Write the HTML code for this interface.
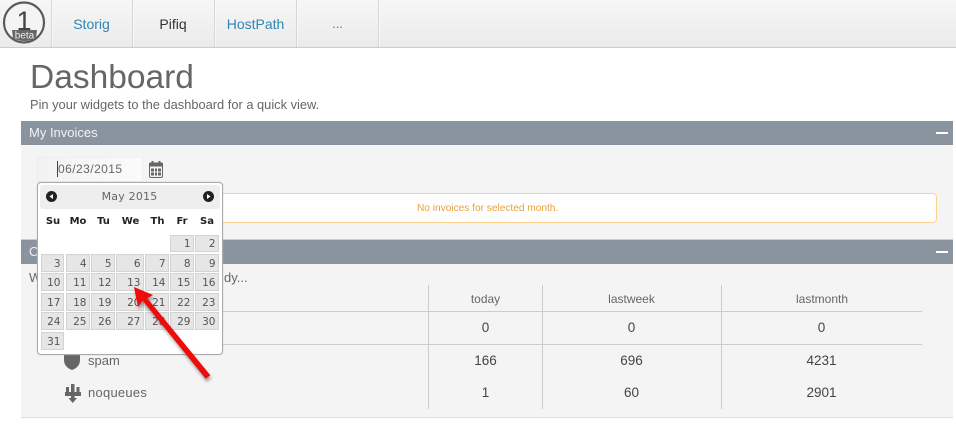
<!DOCTYPE html>
<html><head><meta charset="utf-8">
<style>
html,body{margin:0;padding:0;background:#fff;width:956px;height:425px;overflow:hidden;position:relative;font-family:"Liberation Sans",sans-serif;color:#555}
div,span,svg{position:absolute;box-sizing:border-box}
.t{white-space:nowrap;line-height:16px}
.c{transform:translateX(-50%)}
.nav{left:0;top:0;width:956px;height:48px;background:linear-gradient(#f6f6f6,#ebebeb);border-bottom:1px solid #ccc}
.sep{top:0;width:2px;height:47px;background:#f8f8f8;border-left:1px solid #d6d6d6}
.bar{left:21px;width:932px;height:24px;background:#8a949e}
.min{left:936px;width:12px;height:2px;background:#fff}
.v{width:1px;background:#ccc}
.h{height:1px;background:#ccc}
.d{background:#e6e6e6;border:1px solid #d3d3d3;font:10.500px/18px "DejaVu Sans",sans-serif;color:#555;text-align:right;padding-right:2.500px}
.w{font:bold 10px/14px "DejaVu Sans",sans-serif;color:#222;transform:translateX(-50%);white-space:nowrap}
.n{font-size:13.500px;color:#444;transform:translateX(-50%);line-height:16px}
</style></head><body>
<div class="nav"></div>
<div class="sep" style="left:51px"></div><div class="sep" style="left:132px"></div><div class="sep" style="left:214px"></div><div class="sep" style="left:296px"></div><div class="sep" style="left:378px"></div>
<svg style="left:0;top:0" width="50" height="46" viewBox="0 0 50 46">
<circle cx="24" cy="22.500" r="20" fill="#f4f4f4" stroke="#5a5a5a" stroke-width="2.200"/>
<text x="24" y="30" font-family="Liberation Sans" font-size="27" fill="#444" text-anchor="middle">1</text>
<path d="M12 30h25l-1 8q-5 3-11.500 3q-6.500 0-11.500-3z" fill="#666"/>
<text x="24.500" y="38.500" font-family="Liberation Sans" font-size="10" fill="#eee" text-anchor="middle">beta</text>
</svg>
<div class="t c" style="left:91.500px;top:16px;font-size:14px;color:#2f86b4">Storig</div>
<div class="t c" style="left:173px;top:16px;font-size:14px;color:#333">Pifiq</div>
<div class="t c" style="left:255.500px;top:16px;font-size:14px;color:#2f86b4">HostPath</div>
<div class="t c" style="left:337.500px;top:16px;font-size:13px;color:#2f86b4">...</div>
<div class="t" style="left:30px;top:58px;font-size:33.500px;line-height:40px;color:#666">Dashboard</div>
<div class="t" style="left:30px;top:97px;font-size:12.850px;color:#666">Pin your widgets to the dashboard for a quick view.</div>

<div style="left:21px;top:145px;width:932px;height:95px;background:#f4f4f4"></div>
<div class="bar" style="top:121px"></div>
<div class="t" style="left:29px;top:125px;font-size:13px;color:#f2f2f2">My Invoices</div>
<div class="min" style="top:132px"></div>
<div style="left:37px;top:157px;width:106px;height:25px;background:linear-gradient(90deg,#f2f2f2,#fbfbfb);border:1px solid #eee"></div>
<div class="t" style="left:57px;top:161px;font-size:12px;color:#666;letter-spacing:.45px;border-left:1px solid #444">06/23/2015</div>
<svg style="left:149px;top:161px" width="14" height="17" viewBox="0 0 14 17">
<rect x=".5" y="2" width="13" height="14.500" rx="1.500" fill="#f4f4f4" stroke="#666"/>
<rect x="0" y="1.500" width="14" height="4" rx="1.500" fill="#666"/>
<path d="M3.500 0v3M10.500 0v3" stroke="#666" stroke-width="2"/>
<path d="M2 7.500h10v3H2zM2 11.500h10v3H2z" fill="#666"/>
<path d="M5.500 7v8M8.500 7v8" stroke="#f4f4f4"/>
</svg>
<div style="left:143px;top:193px;width:794px;height:30px;background:#fff;border:1px solid #fdd28e;border-left:0;border-radius:0 4px 4px 0"></div>
<div class="t" style="left:417px;top:201px;font-size:10.150px;color:#e9a13c">No invoices for selected month.</div>

<div style="left:21px;top:239px;width:932px;height:1px;background:#ccc"></div>
<div style="left:21px;top:264px;width:932px;height:154px;background:#f4f4f4;border-bottom:1px solid #ddd"></div>
<div class="bar" style="top:240px"></div>
<div class="t" style="left:29px;top:244px;font-size:13px;color:#f2f2f2">C</div>
<div class="min" style="top:251px"></div>
<div class="t" style="left:29px;top:270px;font-size:13px;color:#666">W</div>
<div class="t" style="left:224px;top:270px;font-size:13px;color:#666">dy...</div>

<div class="v" style="left:428px;top:285px;height:124px"></div>
<div class="v" style="left:542px;top:285px;height:124px"></div>
<div class="v" style="left:721px;top:285px;height:124px"></div>
<div class="h" style="left:210px;top:311px;width:712px"></div>
<div class="h" style="left:210px;top:344px;width:712px"></div>
<div class="t c" style="left:485.500px;top:291px;font-size:12px;color:#666">today</div>
<div class="t c" style="left:631.500px;top:291px;font-size:12px;color:#666">lastweek</div>
<div class="t c" style="left:822px;top:291px;font-size:12px;color:#666">lastmonth</div>
<div class="n" style="left:485.500px;top:320px">0</div><div class="n" style="left:631.500px;top:320px">0</div><div class="n" style="left:821.500px;top:320px">0</div>
<div class="n" style="left:485.500px;top:353px">166</div><div class="n" style="left:631.500px;top:353px">696</div><div class="n" style="left:821.500px;top:353px">4231</div>
<div class="n" style="left:485.500px;top:385px">1</div><div class="n" style="left:631.500px;top:385px">60</div><div class="n" style="left:821.500px;top:385px">2901</div>
<svg style="left:62px;top:350px" width="24" height="56" viewBox="0 0 24 56">
<path d="M2 4h16v6q0 7-8 10q-8-3-8-10z" fill="#666"/>
<path d="M9 34h3.500v14h2.500l-4.250 5-4.250-5h2.500zM4 37h3v5H4zM14.500 37h3v5h-3zM3 42h16v4H3z" fill="#666"/>
</svg>
<div class="t" style="left:88px;top:353px;font-size:13px;color:#666">spam</div>
<div class="t" style="left:88px;top:385px;font-size:13px;color:#666;letter-spacing:.25px">noqueues</div>

<div style="left:37px;top:182px;width:186px;height:173px;background:#fff;border:1px solid #aaa;border-radius:4px;box-shadow:0 0 1px #bbb"></div>
<div style="left:40px;top:185px;width:180px;height:24px;background:#eee;border-radius:3px"></div>
<div class="t c" style="left:129.500px;top:189px;font:11px/16px 'DejaVu Sans',sans-serif;color:#666;letter-spacing:.2px">May 2015</div>
<svg style="left:46px;top:191px" width="11" height="11"><circle cx="5.500" cy="5.500" r="5.500" fill="#222"/><path d="M7 3v5L3.500 5.500z" fill="#fff"/></svg>
<svg style="left:203px;top:191px" width="11" height="11"><circle cx="5.500" cy="5.500" r="5.500" fill="#222"/><path d="M4 3v5l3.500-2.500z" fill="#fff"/></svg>
<div class="w" style="left:53px;top:215px">Su</div><div class="w" style="left:78px;top:215px">Mo</div><div class="w" style="left:103.500px;top:215px">Tu</div><div class="w" style="left:130.500px;top:215px">We</div><div class="w" style="left:157.500px;top:215px">Th</div><div class="w" style="left:182px;top:215px">Fr</div><div class="w" style="left:207px;top:215px">Sa</div>

<div class="d" style="left:170px;top:235px;width:24px;height:17px;line-height:17px">1</div><div class="d" style="left:195px;top:235px;width:24px;height:17px;line-height:17px">2</div>

<div class="d" style="left:41px;top:254px;width:23px;height:18px">3</div><div class="d" style="left:66px;top:254px;width:24px;height:18px">4</div><div class="d" style="left:91px;top:254px;width:24px;height:18px">5</div><div class="d" style="left:116px;top:254px;width:28px;height:18px">6</div><div class="d" style="left:145px;top:254px;width:24px;height:18px">7</div><div class="d" style="left:170px;top:254px;width:24px;height:18px">8</div><div class="d" style="left:195px;top:254px;width:24px;height:18px">9</div>

<div class="d" style="left:41px;top:273px;width:23px;height:18px">10</div><div class="d" style="left:66px;top:273px;width:24px;height:18px">11</div><div class="d" style="left:91px;top:273px;width:24px;height:18px">12</div><div class="d" style="left:116px;top:273px;width:28px;height:18px">13</div><div class="d" style="left:145px;top:273px;width:24px;height:18px">14</div><div class="d" style="left:170px;top:273px;width:24px;height:18px">15</div><div class="d" style="left:195px;top:273px;width:24px;height:18px">16</div>

<div class="d" style="left:41px;top:293px;width:23px;height:18px">17</div><div class="d" style="left:66px;top:293px;width:24px;height:18px">18</div><div class="d" style="left:91px;top:293px;width:24px;height:18px">19</div><div class="d" style="left:116px;top:293px;width:28px;height:18px">20</div><div class="d" style="left:145px;top:293px;width:24px;height:18px">21</div><div class="d" style="left:170px;top:293px;width:24px;height:18px">22</div><div class="d" style="left:195px;top:293px;width:24px;height:18px">23</div>

<div class="d" style="left:41px;top:312px;width:23px;height:18px">24</div><div class="d" style="left:66px;top:312px;width:24px;height:18px">25</div><div class="d" style="left:91px;top:312px;width:24px;height:18px">26</div><div class="d" style="left:116px;top:312px;width:28px;height:18px">27</div><div class="d" style="left:145px;top:312px;width:24px;height:18px">28</div><div class="d" style="left:170px;top:312px;width:24px;height:18px">29</div><div class="d" style="left:195px;top:312px;width:24px;height:18px">30</div>

<div class="d" style="left:41px;top:332px;width:23px;height:18px">31</div>

<svg style="left:125px;top:280px" width="100" height="110" viewBox="0 0 100 110">
<defs><filter id="b" x="-30%" y="-30%" width="160%" height="160%"><feGaussianBlur stdDeviation="1.500"/></filter></defs>
<path d="M9 7L28 15 22.300 18.200 85.300 95.200 80.700 98.800 17.700 20.800 13 27z" fill="#333" opacity=".45" filter="url(#b)" transform="translate(1,3)"/>
<path d="M9 7L28 15 22.300 18.200 85.300 95.200 80.700 98.800 17.700 20.800 13 27z" fill="#f00a0a"/>
</svg>
</body></html>
